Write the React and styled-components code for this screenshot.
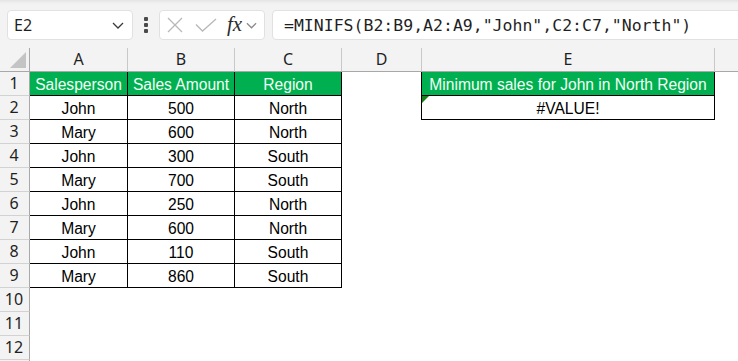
import React from "react";
import styled, { createGlobalStyle } from "styled-components";

const GlobalStyle = createGlobalStyle`
  html, body { margin: 0; padding: 0; background: #ffffff; overflow: hidden; }
  body { font-family: "Noto Sans", "Liberation Sans", sans-serif; }
  * { box-sizing: border-box; }
`;

const Page = styled.div`
  width: 738px;
  height: 361px;
  overflow: hidden;
  background: #ffffff;
`;

const Toolbar = styled.div`
  height: 48px;
  display: flex;
  align-items: flex-start;
  padding: 10px 0 0 7px;
  background: linear-gradient(#e4e4e4 0px, #f0f0f0 3px, #f3f3f3 5px);
`;

const Box = styled.div`
  height: 30px;
  background: #ffffff;
  border: 1px solid #e1e1e1;
  border-radius: 4px;
  display: flex;
  align-items: center;
`;

const NameBox = styled(Box)`
  width: 126px;
  padding: 0 8px 0 6px;
  justify-content: space-between;
  font-family: "Noto Sans", sans-serif;
  font-size: 16px;
  color: #1f1f1f;
`;

const Dots = styled.div`
  width: 4px;
  margin: 7px 11px 0 11px;
  display: flex;
  flex-direction: column;
  gap: 2.5px;
  span {
    display: block;
    width: 3.5px;
    height: 3.5px;
    border-radius: 1px;
    background: #4a4a4a;
  }
`;

const FxBox = styled(Box)`
  width: 106px;
  padding: 0 0 0 7px;
`;

const FxText = styled.span`
  font-family: "Liberation Serif", "DejaVu Serif", serif;
  font-style: italic;
  font-size: 21px;
  color: #2b2b2b;
  margin: 0 4px 0 10px;
  line-height: 1;
  position: relative;
  top: -1px;
`;

const FormulaBar = styled(Box)`
  flex: 1;
  margin-left: 7px;
  margin-right: -20px;
  padding-left: 11px;
  font-family: "DejaVu Sans Mono", "Liberation Mono", monospace;
  font-size: 16.5px;
  color: #1f1f1f;
  white-space: nowrap;
  border-top-right-radius: 0;
  border-bottom-right-radius: 0;
`;

const Sheet = styled.div`
  display: grid;
  grid-template-columns: 30px 98px 107px 107px 80px 293px 1fr;
  grid-auto-rows: 24px;
`;

const Corner = styled.div`
  background: #f3f3f3;
  border-right: 1px solid #a8a8a8;
  border-bottom: 1px solid #a8a8a8;
  display: flex;
  align-items: flex-start;
  justify-content: flex-start;
`;

const ColHeader = styled.div`
  background: #f3f3f3;
  border-right: ${(p) => (p.$last ? "none" : "1px solid #c8c8c8")};
  border-bottom: 1px solid #a8a8a8;
  text-align: center;
  font-family: "Noto Sans", sans-serif;
  font-size: 16px;
  line-height: 23px;
  color: #1f1f1f;
`;

const RowHeader = styled.div`
  background: #f3f3f3;
  border-right: 1px solid #a8a8a8;
  border-bottom: 1px solid #d2d2d2;
  text-align: center;
  font-family: "Noto Sans", sans-serif;
  font-size: 16px;
  line-height: 23px;
  color: #1f1f1f;
  padding-right: 1px;
`;

const Cell = styled.div`
  position: relative;
  background: ${(p) => (p.$green ? "#00b050" : "#ffffff")};
  color: ${(p) => (p.$green ? "#f4fff6" : "#000000")};
  border-right: ${(p) => (p.$r ? "1px solid #000000" : "none")};
  border-bottom: ${(p) => (p.$b ? "1px solid #000000" : "none")};
  text-align: center;
  font-family: "Liberation Sans", Arial, sans-serif;
  font-size: 15.6px;
  line-height: 25px;
  white-space: nowrap;
  overflow: hidden;

  ${(p) =>
    p.$error &&
    `
    &::before {
      content: "";
      position: absolute;
      left: 0;
      top: 0;
      width: 0;
      height: 0;
      border-top: 7px solid #1a7f1a;
      border-right: 7px solid transparent;
    }
  `}
`;

const Chevron = ({ color = "#333", w = 12 }) => (
  <svg width={w} height="7" viewBox="0 0 12 7" fill="none">
    <path d="M1 1 L6 6 L11 1" stroke={color} strokeWidth="1.3" />
  </svg>
);

const table = [
  ["John", "500", "North"],
  ["Mary", "600", "North"],
  ["John", "300", "South"],
  ["Mary", "700", "South"],
  ["John", "250", "North"],
  ["Mary", "600", "North"],
  ["John", "110", "South"],
  ["Mary", "860", "South"],
];

export default function App() {
  const rows = [];
  rows.push(
    <React.Fragment key="r1">
      <RowHeader>1</RowHeader>
      <Cell $green $r $b>Salesperson</Cell>
      <Cell $green $r $b>Sales Amount</Cell>
      <Cell $green $r $b>Region</Cell>
      <Cell $r />
      <Cell $green $r $b>Minimum sales for John in North Region</Cell>
      <Cell />
    </React.Fragment>
  );
  table.forEach((r, i) => {
    const n = i + 2;
    rows.push(
      <React.Fragment key={"r" + n}>
        <RowHeader>{n}</RowHeader>
        <Cell $r $b>{r[0]}</Cell>
        <Cell $r $b>{r[1]}</Cell>
        <Cell $r $b>{r[2]}</Cell>
        {n === 2 ? <Cell $r /> : <Cell />}
        {n === 2 ? <Cell $r $b $error>#VALUE!</Cell> : <Cell />}
        <Cell />
      </React.Fragment>
    );
  });
  [10, 11, 12, null].forEach((n, i) => {
    rows.push(
      <React.Fragment key={"e" + i}>
        <RowHeader>{n}</RowHeader>
        <Cell />
        <Cell />
        <Cell />
        <Cell />
        <Cell />
        <Cell />
      </React.Fragment>
    );
  });

  return (
    <Page>
      <GlobalStyle />
      <Toolbar>
        <NameBox>
          <span>E2</span>
          <Chevron color="#3a3a3a" />
        </NameBox>
        <Dots>
          <span />
          <span />
          <span />
        </Dots>
        <FxBox>
          <svg width="16" height="16" viewBox="0 0 16 16" fill="none">
            <path d="M1 1 L15 15 M15 1 L1 15" stroke="#b8b8b8" strokeWidth="1.3" />
          </svg>
          <svg width="22" height="14" viewBox="0 0 22 14" fill="none" style={{ marginLeft: 12 }}>
            <path d="M1 6.5 L7.5 13 L21 1" stroke="#b8b8b8" strokeWidth="1.3" />
          </svg>
          <FxText>fx</FxText>
          <Chevron color="#8a8a8a" w={11} />
        </FxBox>
        <FormulaBar>=MINIFS(B2:B9,A2:A9,"John",C2:C7,"North")</FormulaBar>
      </Toolbar>
      <Sheet>
        <Corner>
          <svg width="29" height="23" viewBox="0 0 29 23">
            <polygon points="26,4 26,20 10,20" fill="#c4c4c4" />
          </svg>
        </Corner>
        <ColHeader>A</ColHeader>
        <ColHeader>B</ColHeader>
        <ColHeader>C</ColHeader>
        <ColHeader>D</ColHeader>
        <ColHeader>E</ColHeader>
        <ColHeader $last />
        {rows}
      </Sheet>
    </Page>
  );
}
